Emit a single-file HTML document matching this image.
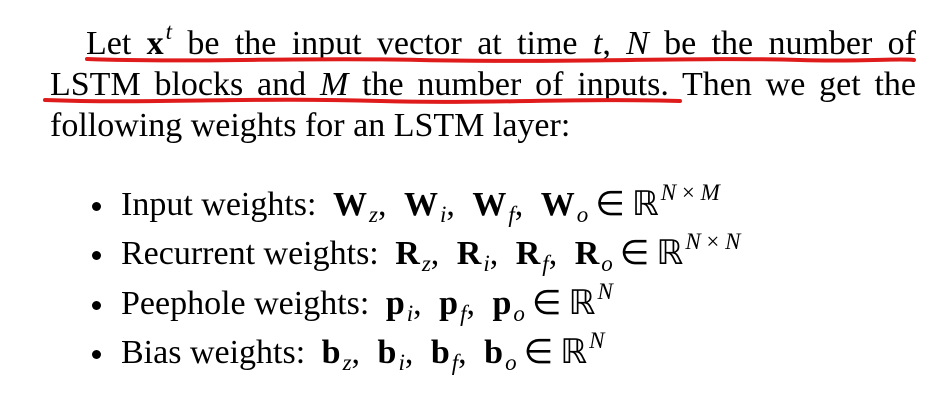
<html><head><style>
body{margin:0;width:943px;height:405px;background:#fff;overflow:hidden;position:relative;font-family:"Liberation Serif",serif;color:#000}
.l{position:absolute;font-size:34px;line-height:40px;white-space:nowrap;text-align:justify;text-align-last:justify}
.b{position:absolute;font-size:34px;line-height:40px;white-space:nowrap;left:92px}
i{font-style:italic}
sub,sup{font-size:23px;line-height:0}
sub{vertical-align:-7px;margin-left:2px}
sup{vertical-align:15px;margin-left:2px}
.bb{font-weight:bold}
.m{margin-left:8px}
.c{margin-right:9px}
.e{margin:0 7px}
.dot{display:inline-block;width:9px;height:9px;border-radius:50%;background:#000;margin-right:20px;vertical-align:4px}
</style></head><body>
<div class="l" style="left:86px;top:24px;width:830px">Let <span class="bb">x</span><sup><i>t</i></sup> be the input vector at time <i>t</i>, <i>N</i> be the number of</div>
<div class="l" style="left:50px;top:65px;width:866px">LSTM blocks and <i>M</i> the number of inputs. Then we get the</div>
<div class="l" style="left:50px;top:106px;width:405px;text-align-last:left">following weights for an LSTM layer:</div>
<div class="b" style="top:185px"><span class="dot"></span>Input weights:<span class="m"></span> <span class="bb">W</span><sub><i>z</i></sub>,<span class="c"></span> <span class="bb">W</span><sub><i>i</i></sub>,<span class="c"></span> <span class="bb">W</span><sub><i>f</i></sub>,<span class="c"></span> <span class="bb">W</span><sub><i>o</i></sub><span class="e">∈</span>ℝ<sup><i>N</i> × <i>M</i></sup></div>
<div class="b" style="top:234px"><span class="dot"></span>Recurrent weights:<span class="m"></span> <span class="bb">R</span><sub><i>z</i></sub>,<span class="c"></span> <span class="bb">R</span><sub><i>i</i></sub>,<span class="c"></span> <span class="bb">R</span><sub><i>f</i></sub>,<span class="c"></span> <span class="bb">R</span><sub><i>o</i></sub><span class="e">∈</span>ℝ<sup><i>N</i> × <i>N</i></sup></div>
<div class="b" style="top:284px"><span class="dot"></span>Peephole weights:<span class="m"></span> <span class="bb">p</span><sub><i>i</i></sub>,<span class="c"></span> <span class="bb">p</span><sub><i>f</i></sub>,<span class="c"></span> <span class="bb">p</span><sub><i>o</i></sub><span class="e">∈</span>ℝ<sup><i>N</i></sup></div>
<div class="b" style="top:333px"><span class="dot"></span>Bias weights:<span class="m"></span> <span class="bb">b</span><sub><i>z</i></sub>,<span class="c"></span> <span class="bb">b</span><sub><i>i</i></sub>,<span class="c"></span> <span class="bb">b</span><sub><i>f</i></sub>,<span class="c"></span> <span class="bb">b</span><sub><i>o</i></sub><span class="e">∈</span>ℝ<sup><i>N</i></sup></div>
<svg width="943" height="405" style="position:absolute;left:0;top:0" fill="none" stroke="#e01b1b" stroke-width="4" stroke-linecap="round">
<path d="M87 59 C200 63 300 57 420 60 C560 63 700 57 800 60 C860 62 900 58 914 60"/>
<path d="M45 100 C150 104 250 97 380 101 C480 104 580 98 680 101"/>
</svg>
</body></html>
